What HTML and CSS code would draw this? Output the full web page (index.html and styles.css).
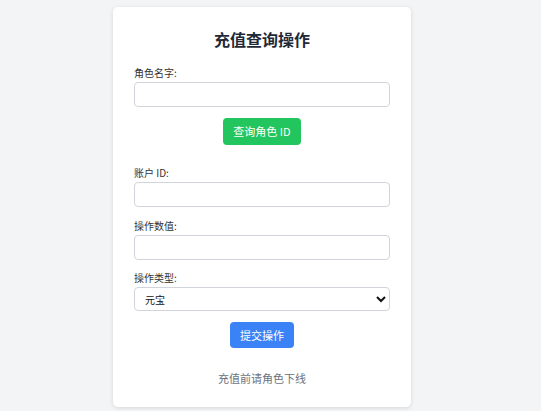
FILE: index.html
```html
<!DOCTYPE html>
<html lang="zh">
<head>
<meta charset="utf-8">
<title>充值查询操作</title>
<link rel="stylesheet" href="styles.css">
</head>
<body>
<div class="card">
  <h1 class="title">充值查询操作</h1>
  <div class="field f1">
    <label class="label">角色名字:</label>
    <input class="input" type="text">
  </div>
  <div class="actions">
    <button class="btn btn-green">查询角色 ID</button>
  </div>
  <div class="field f2">
    <label class="label">账户 ID:</label>
    <input class="input" type="text">
  </div>
  <div class="field f3">
    <label class="label">操作数值:</label>
    <input class="input" type="text">
  </div>
  <div class="field f4">
    <label class="label">操作类型:</label>
    <select class="input select">
      <option>元宝</option>
    </select>
  </div>
  <div class="actions">
    <button class="btn btn-blue">提交操作</button>
  </div>
  <p class="note">充值前请角色下线</p>
</div>
</body>
</html>
```
FILE: styles.css
```css
html, body {
  margin: 0;
  padding: 0;
  background: #f3f4f6;
  font-family: "Noto Sans CJK SC", "Noto Sans", sans-serif;
}
body {
  padding: 7px 0 0 113px;
  height: 411px;
  box-sizing: border-box;
}
.card {
  width: 298px;
  height: 400px;
  box-sizing: border-box;
  background: #fff;
  border-radius: 5px;
  box-shadow: 0 1px 4px rgba(0,0,0,0.12);
  padding: 20px 21px 0;
  display: flex;
  flex-direction: column;
}
.title {
  margin: 0;
  font-size: 16px;
  line-height: 24px;
  font-weight: 700;
  color: #1f2937;
  text-align: center;
}
.field {
  display: flex;
  flex-direction: column;
}
.f1 { margin-top: 15px; }
.f2 { margin-top: 21px; }
.f3 { margin-top: 12px; }
.f4 { margin-top: 11px; }
.label {
  font-size: 10px;
  line-height: 14px;
  color: #333;
  margin-bottom: 2px;
}
.input {
  height: 25px;
  box-sizing: border-box;
  border: 1px solid #d1d5db;
  border-radius: 4px;
  background: #fff;
  font-family: inherit;
  font-size: 10px;
  padding: 0 8px;
  margin: 0;
}
.select {
  height: 24px;
  padding: 0 6px 0 6px;
  color: #111;
}
.actions {
  display: flex;
  justify-content: center;
  margin-top: 11px;
}
.btn {
  border: none;
  border-radius: 4px;
  color: #fff;
  font-family: inherit;
  font-size: 11px;
  line-height: 15px;
  padding: 6px 10px;
  height: 27px;
}
.btn-green { background: #22c55e; width: 78px; }
.btn-blue { background: #3b82f6; width: 64px; height: 26px; }
.note {
  margin: 22px 0 0;
  text-align: center;
  font-size: 11px;
  line-height: 16px;
  color: #6b7280;
}
```
